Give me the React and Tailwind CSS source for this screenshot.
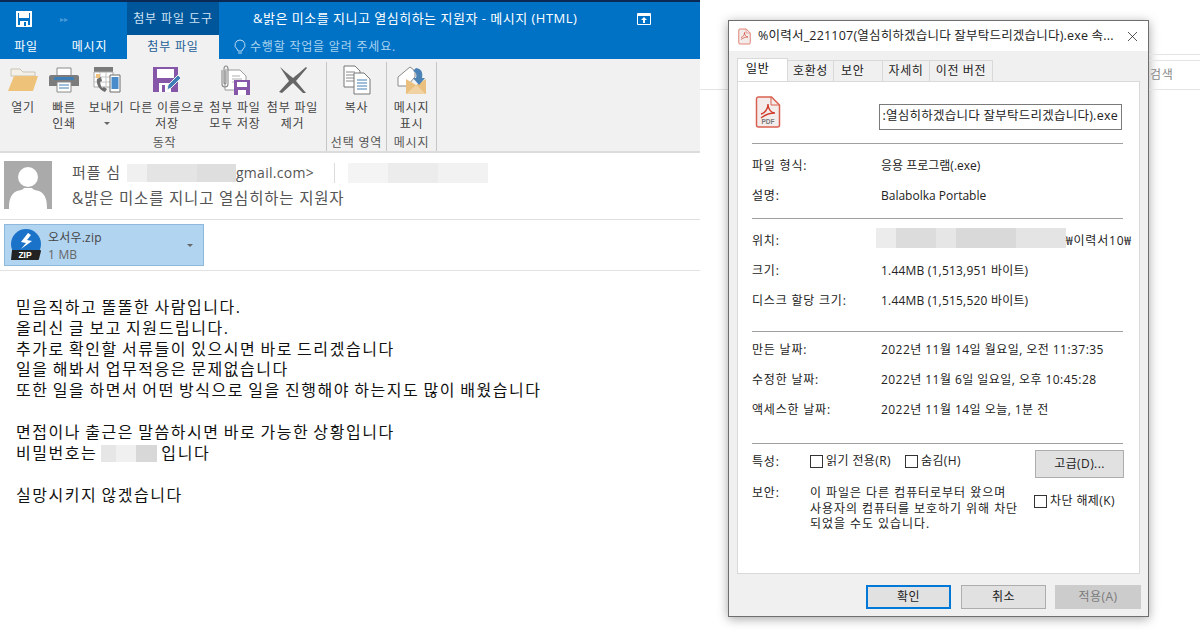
import { X } from "lucide-react";

const FONT = "font-['Open_Sans','Noto_Sans_CJK_KR',sans-serif]";

function SaveIcon() {
  return (
    <svg width="16" height="16" viewBox="0 0 16 16">
      <path d="M1 1h14v14H1z" fill="none" stroke="#fff" strokeWidth="2" />
      <path d="M3 2h10v5H3z" fill="#fff" />
      <path d="M4 10h8v5H4z" fill="#fff" />
      <path d="M8 11h2v4H8z" fill="#0072c6" />
    </svg>
  );
}

function RestoreIcon() {
  return (
    <svg width="14" height="12" viewBox="0 0 14 12">
      <path d="M.5.5h13v11H.5z" fill="none" stroke="#fff" />
      <path d="M1 1h12v2H1z" fill="#fff" />
      <path d="M7 4l3 3H8v3H6V7H4z" fill="#fff" />
    </svg>
  );
}

function FolderIcon() {
  return (
    <svg width="30" height="26" viewBox="0 0 30 26">
      <path d="M3 2h9l3 3h12v4H3z" fill="#f3f0e8" stroke="#c9c3b4" />
      <path d="M6 9h24l-5 15H0z" fill="#efc27a" />
    </svg>
  );
}

function PrinterIcon() {
  return (
    <svg width="30" height="26" viewBox="0 0 30 26">
      <path d="M8 1h14v9H8z" fill="#fff" stroke="#8a8a8a" />
      <path d="M2 8h26a2 2 0 0 1 2 2v9H0v-9a2 2 0 0 1 2-2z" fill="#7c7c7c" />
      <path d="M5 10h20v3H5z" fill="#3f7fb5" />
      <path d="M8 15h14v10H8z" fill="#fff" stroke="#8a8a8a" />
      <path d="M10 18h10M10 21h10" stroke="#3f7fb5" />
    </svg>
  );
}

function SendIcon() {
  return (
    <svg width="28" height="28" viewBox="0 0 28 28">
      <path d="M1 1h19v5H1z" fill="#7a7a7a" />
      <path d="M1 6h19v15H1z" fill="#fff" stroke="#a9a9a9" />
      <path d="M7 6v15M13 6v15M1 11h19M1 16h19" stroke="#c4c4c4" />
      <path d="M3 8h4v4H3z" fill="#f0c27b" />
      <path d="M4 13c-1 5 2 11 8 13l2-3-3-2-2 1c-1-2-2-4-2-6l2-1-1-4z" fill="#6d6d6d" />
      <path d="M17 9h10v17H17z" fill="#fff" stroke="#6d6d6d" />
      <path d="M18.500 11h7v12h-7z" fill="#4a8ccb" />
    </svg>
  );
}

function SaveAsIcon() {
  return (
    <svg width="30" height="28" viewBox="0 0 30 28">
      <path d="M1 1h25v25H1z" fill="#8656a8" />
      <path d="M5 3h17v9H5z" fill="#fff" />
      <path d="M7 17h12v9H7z" fill="#fff" />
      <path d="M10 19h3v7h-3z" fill="#8656a8" />
      <path d="M15 24l1-5 10-10 3 3-10 10z" fill="#3f7fb5" stroke="#f1f1f1" />
    </svg>
  );
}

function SaveAllIcon() {
  return (
    <svg width="30" height="30" viewBox="0 0 30 30">
      <path d="M5 5h15l6 6v14H5z" fill="#fff" stroke="#9a9a9a" />
      <path d="M12 11h8M12 14h10M12 17h3" stroke="#b0b0b0" />
      <path d="M2 5v14c0 4 6 4 6 0V4c0-4-4-4-4 0v14c0 1 2 1 2 0V6" fill="none" stroke="#8a8a8a" strokeWidth="1.100" />
      <path d="M14 15h16v15H14z" fill="#8656a8" />
      <path d="M17 17h10v5H17z" fill="#fff" />
      <path d="M18 25h8v5h-8z" fill="#fff" />
    </svg>
  );
}

function RemoveIcon() {
  return (
    <svg width="30" height="28" viewBox="0 0 30 28">
      <path d="M2 1c6 5 9 8 13 11 4-3 8-7 13-11l1 1-11 13 10 12-3 0-10-10L4 27l-3-1 10-11z" fill="#666" />
    </svg>
  );
}

function CopyIcon() {
  return (
    <svg width="28" height="30" viewBox="0 0 28 30">
      <path d="M1 1h11l5 5v16H1z" fill="#fff" stroke="#777" />
      <path d="M3 7h9M3 10h11M3 13h11M3 16h11" stroke="#8a8a8a" />
      <path d="M11 8h10l6 6v15H11z" fill="#fff" stroke="#777" />
      <path d="M14 15h10M14 18h10M14 21h10M14 24h10" stroke="#3f7fb5" />
    </svg>
  );
}

function EnvelopeIcon() {
  return (
    <svg width="30" height="30" viewBox="0 0 30 30">
      <path d="M1 12L13 2l5 4v6l-8 9H1z" fill="#fff" stroke="#8a8a8a" />
      <path d="M9 14l10 6 10-6v15H9z" fill="#eac07f" />
      <path d="M9 29l10-9 10 9z" fill="#f1d2a2" />
      <path d="M19 3c6 1 7 5 6 10h3l-6 7-6-7h3c1-3 0-6-3-7z" fill="#4a82b5" />
    </svg>
  );
}

function PdfIcon({ small }) {
  const w = small ? 13 : 26;
  const h = small ? 17 : 32;
  return (
    <svg width={w} height={h} viewBox="0 0 26 32">
      <path d="M1.500 3a2 2 0 0 1 2-2h13l8 8v20a2 2 0 0 1-2 2h-19a2 2 0 0 1-2-2z" fill="#f4ecea" stroke="#d9604f" strokeWidth="1.500" />
      <path d="M16 1v8h8" fill="none" stroke="#d9604f" />
      <path d="M6 18c4-1 7-5 7-10 0 5 3 9 7 9-4 0-9 1-14 5" fill="none" stroke="#cf3a2a" strokeWidth="1.300" />
      {!small && (
        <text x="13" y="28" textAnchor="middle" fontSize="6.500" fontWeight="700" fill="#777" fontFamily="Liberation Sans">PDF</text>
      )}
    </svg>
  );
}

function ZipIcon() {
  return (
    <svg width="32" height="32" viewBox="0 0 32 32">
      <circle cx="16" cy="15" r="15" fill="#1a73c9" />
      <path d="M18 4l-7 9 5 1-5 6 11-8-5-1 4-5z" fill="#fff" />
      <path d="M2 21h28a1 1 0 0 1 1 1l-2 8a1 1 0 0 1-1 1H1z" fill="#222" />
      <text x="15" y="29" textAnchor="middle" fontSize="8.500" fontWeight="700" fill="#fff" fontFamily="Liberation Sans">ZIP</text>
    </svg>
  );
}

function Avatar() {
  return (
    <svg width="48" height="48" viewBox="0 0 48 48" className="shrink-0">
      <path d="M0 0h48v48H0z" fill="#aaaaaa" />
      <circle cx="24" cy="16" r="10" fill="#fff" />
      <path d="M5 48c0-8 1-15 8-18 3-1 6-1 7-3h8c1 2 4 2 7 3 7 3 8 10 8 18z" fill="#fff" />
    </svg>
  );
}

function RibbonButton({ width, icon, lines, caret }) {
  return (
    <div className={`${width} flex flex-col items-center shrink-0`}>
      <div className="h-[36px] flex items-center justify-center">{icon}</div>
      <div className="mt-[2px] text-center text-[12px] leading-[15.5px] tracking-[0.8px] text-[#444] whitespace-nowrap">
        {lines.map((l) => (
          <div key={l}>{l}</div>
        ))}
      </div>
      {caret && <div className="mt-[6px] w-0 h-0 border-x-[3px] border-x-transparent border-t-[3px] border-t-[#666]" />}
    </div>
  );
}

function RibbonGroup({ label, width, children }) {
  return (
    <div className={`${width} h-full flex flex-col border-r border-[#c6c6c6] shrink-0`}>
      <div className="flex flex-1">{children}</div>
      <div className="text-center text-[12px] leading-[16px] tracking-[0.8px] text-[#555]">{label}</div>
    </div>
  );
}

function OutlookWindow() {
  return (
    <div className="w-[700px] h-full flex flex-col shrink-0 bg-white">
      <div className="h-[35px] bg-[#0072c6] border-t-2 border-[#0a2a55] flex items-stretch text-white shrink-0">
        <div className="w-[127px] flex items-center pl-[16px]">
          <SaveIcon />
          <span className="ml-[28px] text-[8px] text-[#4a9ad8]">▸▸</span>
        </div>
        <div className="w-[92px] bg-[#00569b] flex items-center justify-center text-[12px] tracking-[0.9px] text-[#cfe3f3]">첨부 파일 도구</div>
        <div className="flex-1 flex items-center pl-[34px] text-[13px] tracking-[0.5px]">&밝은 미소를 지니고 열심히하는 지원자 - 메시지 (HTML)</div>
        <div className="w-[78px] flex items-center pl-[15px]">
          <RestoreIcon />
        </div>
      </div>
      <div className="h-[24px] bg-[#0072c6] flex items-stretch text-[12px] tracking-[0.8px] text-white shrink-0">
        <div className="w-[52px] flex items-center justify-center">파일</div>
        <div className="w-[75px] flex items-center justify-center">메시지</div>
        <div className="w-[92px] bg-[#f1f1f1] text-[#1a5e96] flex items-center justify-center">첨부 파일</div>
        <div className="flex items-center pl-[15px] text-[#a9d2ef]">
          <svg width="12" height="16" viewBox="0 0 12 16" className="mr-[4px]">
            <path d="M6 1a5 5 0 0 0-3 9l1 2h4l1-2a5 5 0 0 0-3-9zM4 14h4" fill="none" stroke="#bcdcf3" />
          </svg>
          수행할 작업을 알려 주세요.
        </div>
      </div>
      <div className="h-[94px] bg-[#f1f1f1] border-b-2 border-[#dcdcdc] flex pt-[3px] pl-[3px] shrink-0">
        <RibbonGroup label="동작" width="w-[324px]">
          <RibbonButton width="w-[40px]" icon={<FolderIcon />} lines={["열기"]} />
          <RibbonButton width="w-[42px]" icon={<PrinterIcon />} lines={["빠른", "인쇄"]} />
          <RibbonButton width="w-[43px]" icon={<SendIcon />} lines={["보내기"]} caret />
          <RibbonButton width="w-[78px]" icon={<SaveAsIcon />} lines={["다른 이름으로", "저장"]} />
          <RibbonButton width="w-[58px]" icon={<SaveAllIcon />} lines={["첨부 파일", "모두 저장"]} />
          <RibbonButton width="w-[57px]" icon={<RemoveIcon />} lines={["첨부 파일", "제거"]} />
        </RibbonGroup>
        <RibbonGroup label="선택 영역" width="w-[60px]">
          <div className="w-full flex justify-center">
            <RibbonButton width="w-[50px]" icon={<CopyIcon />} lines={["복사"]} />
          </div>
        </RibbonGroup>
        <RibbonGroup label="메시지" width="w-[50px]">
          <div className="w-full flex justify-center">
            <RibbonButton width="w-[44px]" icon={<EnvelopeIcon />} lines={["메시지", "표시"]} />
          </div>
        </RibbonGroup>
      </div>
      <div className="h-[67px] flex pl-[4px] pt-[8px] border-b border-[#dedede] shrink-0">
        <Avatar />
        <div className="ml-[20px] flex-1 text-[#555]">
          <div className="h-[23px] flex items-center text-[15px] tracking-[0.9px]">
            <span>퍼플 심</span>
            <div className="ml-[6px] w-[109px] h-[18px] flex">
              <div className="w-[20px] bg-[#f0f0f0]" />
              <div className="w-[50px] bg-[#e4e4e4]" />
              <div className="flex-1 bg-[#dedede]" />
            </div>
            <span className="text-[14px] tracking-[0.3px]">gmail.com&gt;</span>
            <div className="ml-[20px] h-[20px] border-l border-[#dcdcdc]" />
            <div className="ml-[13px] w-[140px] h-[20px] flex">
              <div className="w-[40px] bg-[#f4f4f4]" />
              <div className="w-[50px] bg-[#ececec]" />
              <div className="flex-1 bg-[#f2f2f2]" />
            </div>
          </div>
          <div className="mt-[2px] text-[15.500px] leading-[24px] tracking-[0.8px]">&밝은 미소를 지니고 열심히하는 지원자</div>
        </div>
      </div>
      <div className="h-[51px] pl-[4px] pt-[4px] border-b border-[#e2e2e2] shrink-0">
        <div className="w-[200px] h-[42px] bg-[#b1d4f0] border border-[#8fb9dc] flex items-center pl-[5px] pr-[10px]">
          <ZipIcon />
          <div className="ml-[6px] flex-1 text-[12px] leading-[17px] pt-[2px] tracking-[0.2px] text-[#444]">
            <div>오서우.zip</div>
            <div className="text-[#666]">1 MB</div>
          </div>
          <div className="w-0 h-0 border-x-[3px] border-x-transparent border-t-[3px] border-t-[#666]" />
        </div>
      </div>
      <div className="pl-[16px] pt-[26px] text-[16px] leading-[20.800px] tracking-[1.55px] [word-spacing:-1.55px] text-[#111]">
        <div>믿음직하고 똘똘한 사람입니다.</div>
        <div>올리신 글 보고 지원드립니다.</div>
        <div>추가로 확인할 서류들이 있으시면 바로 드리겠습니다</div>
        <div>일을 해봐서 업무적응은 문제없습니다</div>
        <div>또한 일을 하면서 어떤 방식으로 일을 진행해야 하는지도 많이 배웠습니다</div>
        <div className="h-[21px]" />
        <div>면접이나 출근은 말씀하시면 바로 가능한 상황입니다</div>
        <div className="flex items-center">
          <span>비밀번호는</span>
          <div className="mx-[4px] w-[56px] h-[17px] flex">
            <div className="w-[15px] bg-[#e6e6e6]" />
            <div className="w-[20px] bg-[#f0f0f0]" />
            <div className="flex-1 bg-[#d8d8d8]" />
          </div>
          <span>입니다</span>
        </div>
        <div className="h-[21px]" />
        <div>실망시키지 않겠습니다</div>
      </div>
    </div>
  );
}

function Tab({ width, active, left, children }) {
  return active ? (
    <div className={`${width} h-[23px] bg-white border border-b-0 border-[#d9d9d9] text-[#111] pl-[8px] leading-[19px] -mb-px relative`}>{children}</div>
  ) : (
    <div className={`${width} h-[21px] mt-[2px] bg-[#f0f0f0] border border-b-0 border-l-0 border-[#d9d9d9] leading-[19px] ${left ? "pl-[7px]" : "text-center"}`}>{children}</div>
  );
}

function Divider({ className }) {
  return <div className={`h-px bg-[#a0a0a0] ${className || ""}`} />;
}

function InfoRow({ label, value, children }) {
  return (
    <div className="h-[30px] flex items-center">
      <div className="w-[129px] shrink-0 tracking-[0.8px]">{label}</div>
      <div className={`whitespace-nowrap ${value || ""}`}>{children}</div>
    </div>
  );
}

function DialogButton({ className, children }) {
  return <div className={`h-[24px] flex items-center justify-center tracking-[0.5px] ${className}`}>{children}</div>;
}

function Check({ children, className }) {
  return (
    <div className={`flex items-center tracking-[0.4px] ${className || ""}`}>
      <div className="w-[13px] h-[13px] bg-white border border-[#333] mr-[3px]" />
      {children}
    </div>
  );
}

function PropertiesDialog() {
  return (
    <div className="w-[421px] h-[597px] mt-[20px] bg-[#f0f0f0] border border-[#6e6e6e] shadow-[0_2px_10px_rgba(0,0,0,0.35)] shrink-0 flex flex-col text-[12px] text-[#222]">
      <div className="h-[30px] bg-white flex items-center pl-[9px] pr-[7px] shrink-0">
        <PdfIcon small />
        <div className="ml-[7px] flex-1 text-[12.500px] tracking-[0.2px] whitespace-nowrap overflow-hidden">%이력서_221107(열심히하겠습니다 잘부탁드리겠습니다).exe 속...</div>
        <X size={17} strokeWidth={1} color="#111" className="ml-[6px] shrink-0" />
      </div>
      <div className="flex pl-[8px] pt-[7px] shrink-0 relative z-10 tracking-[0.6px]">
        <Tab width="w-[51px]" active>일반</Tab>
        <Tab width="w-[46px]">호환성</Tab>
        <Tab width="w-[49px]" left>보안</Tab>
        <Tab width="w-[47px]">자세히</Tab>
        <Tab width="w-[63px]">이전 버전</Tab>
      </div>
      <div className="mx-[8px] h-[493px] bg-white border border-[#d9d9d9] pl-[14px] pr-[16px] pt-[14px] shrink-0">
        <div className="h-[47px] flex items-start pl-[3px]">
          <PdfIcon />
          <div className="ml-[98px] mt-[8px] w-[243px] h-[26px] border border-[#7a7a7a] flex items-center justify-end pr-[3px] pb-[2px] overflow-hidden whitespace-nowrap text-[12.500px] tracking-[0.25px]">
            :열심히하겠습니다 잘부탁드리겠습니다).exe
          </div>
        </div>
        <Divider />
        <div className="pt-[7px]">
          <InfoRow label="파일 형식:">응용 프로그램(.exe)</InfoRow>
          <InfoRow label="설명:">Balabolka Portable</InfoRow>
        </div>
        <Divider className="mt-[7px]" />
        <div className="pt-[7px]">
          <InfoRow label="위치:">
            <div className="flex items-center -ml-[5px]">
              <div className="w-[190px] h-[20px] -mt-[6px] flex">
                <div className="w-[20px] bg-[#ececec]" />
                <div className="w-[40px] bg-[#dcdcdc]" />
                <div className="w-[20px] bg-[#e6e6e6]" />
                <div className="w-[60px] bg-[#d9d9d9]" />
                <div className="flex-1 bg-[#e4e4e4]" />
              </div>
              <span className="tracking-[0.8px]">₩이력서10₩</span>
            </div>
          </InfoRow>
          <InfoRow label="크기:" value="tracking-[0.2px]">1.44MB (1,513,951 바이트)</InfoRow>
          <InfoRow label="디스크 할당 크기:" value="tracking-[0.2px]">1.44MB (1,515,520 바이트)</InfoRow>
        </div>
        <Divider className="mt-[15px]" />
        <div className="pt-[3px]">
          <InfoRow label="만든 날짜:" value="tracking-[0.45px]">2022년 11월 14일 월요일, 오전 11:37:35</InfoRow>
          <InfoRow label="수정한 날짜:" value="tracking-[0.45px]">2022년 11월 6일 일요일, 오후 10:45:28</InfoRow>
          <InfoRow label="액세스한 날짜:" value="tracking-[0.45px]">2022년 11월 14일 오늘, 1분 전</InfoRow>
        </div>
        <Divider className="mt-[18px]" />
        <div className="flex pt-[6px] h-[34px]">
          <div className="w-[58px] pt-[3px] tracking-[0.8px]">특성:</div>
          <Check className="h-[22px]">읽기 전용(R)</Check>
          <Check className="h-[22px] ml-[14px]">숨김(H)</Check>
          <div className="ml-auto -mr-px w-[89px] h-[28px] bg-[#e1e1e1] border border-[#adadad] flex items-center justify-center tracking-[0.4px]">고급(D)...</div>
        </div>
        <div className="flex pt-[7px]">
          <div className="w-[58px] leading-[15.500px] tracking-[0.8px]">보안:</div>
          <div className="w-[224px] leading-[15.500px] tracking-[0.95px]">
            이 파일은 다른 컴퓨터로부터 왔으며
            <br />
            사용자의 컴퓨터를 보호하기 위해 차단
            <br />
            되었을 수도 있습니다.
          </div>
          <Check className="h-[18px] mt-[7px]">차단 해제(K)</Check>
        </div>
      </div>
      <div className="flex justify-end pr-[7px] pt-[11px]">
        <DialogButton className="w-[85px] bg-[#e1e1e1] border-2 border-[#0078d7]">확인</DialogButton>
        <DialogButton className="w-[85px] ml-[10px] bg-[#e1e1e1] border border-[#adadad]">취소</DialogButton>
        <DialogButton className="w-[86px] ml-[9px] bg-[#cccccc] text-[#7a7a7a]">적용(A)</DialogButton>
      </div>
    </div>
  );
}

export default function App() {
  return (
    <div className={`w-[1200px] h-[632px] bg-white flex overflow-hidden ${FONT}`}>
      <OutlookWindow />
      <div className="w-[28px] h-full shrink-0 pt-[89px]">
        <div className="h-px bg-[#e4e4e4]" />
      </div>
      <PropertiesDialog />
      <div className="flex-1">
        <div className="h-[54px]" />
        <div className="h-px bg-[#e4e4e4]" />
        <div className="h-[5px]" />
        <div className="h-px bg-[#e4e4e4]" />
        <div className="h-[28px] pl-[1px] flex items-center text-[12px] tracking-[0.6px] text-[#888]">검색</div>
        <div className="h-px bg-[#e4e4e4]" />
      </div>
    </div>
  );
}
